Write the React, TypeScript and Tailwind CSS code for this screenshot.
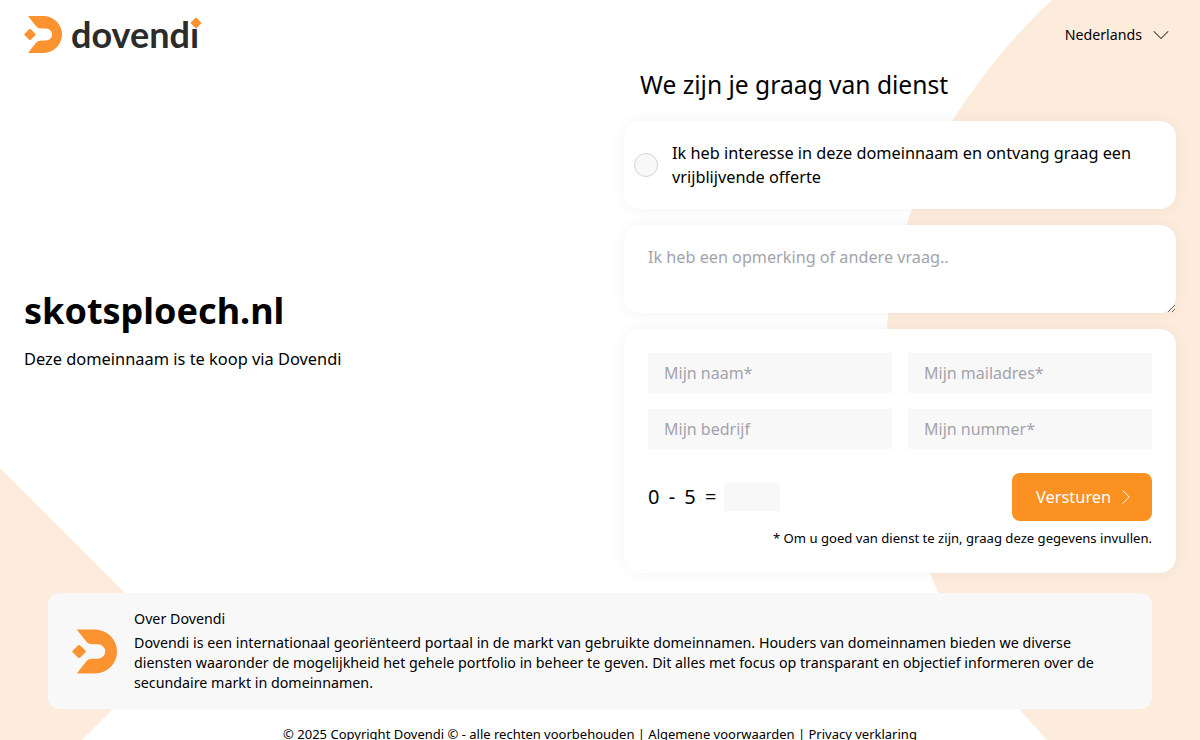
import { ChevronDown, ChevronRight } from "lucide-react";

function LogoMark({ className }: { className: string }) {
  return (
    <svg viewBox="0 0 38 37" className={className} fill="#fb9331">
      <path d="M4 0H19.5A18.5 18.5 0 0 1 19.5 37H4L11.5 27.5Q13.5 24.6 17 24.6H22A6.1 6.1 0 0 0 22 12.4H17Q13.5 12.4 11.5 9.5Z" />
      <path d="M5.2 13.3Q6 12.6 6.8 13.3L11.3 17.7Q12 18.5 11.3 19.3L6.8 23.7Q6 24.4 5.2 23.7L.7 19.3Q0 18.5.7 17.7Z" />
    </svg>
  );
}

const fieldClass =
  "h-10 w-full bg-[#f8f8f9] px-4 text-base text-black outline-none placeholder:text-[#a3a3ad]";

export default function App() {
  return (
    <div className="relative flex h-[740px] flex-col overflow-hidden bg-white font-['Noto_Sans',sans-serif] text-black">
      {/* background shapes */}
      <svg viewBox="0 0 1200 740" className="absolute inset-0 h-full w-full" fill="#fdebdc">
        <path d="M1052 0C1015 34 982 74 953 120C932 152 920 180 912 209C899 245 892 278 888 313C882 400 900 500 930 573C950 625 985 672 1047 740H1200V0Z" />
        <path d="M0 468L177 645L82 740H0Z" />
      </svg>

      <div className="relative grid flex-1 grid-cols-2">
        <div className="flex flex-col px-6">
          <div className="flex h-[69px] items-start pt-4">
            <LogoMark className="h-[37px] w-[38px]" />
            <div className="relative ml-[9px] font-['Lato',sans-serif] text-[36px] leading-[37px] font-bold text-[#2b2b2b]">
              dovendı
              <span className="absolute top-[3px] right-[-1px] h-[8px] w-[8px] rotate-45 rounded-[1px] bg-[#fb9331]" />
            </div>
          </div>
          <div className="mt-[217px]">
            <h1 className="text-4xl leading-[50px] font-bold">skotsploech.nl</h1>
            <p className="mt-[11px] text-[16.4px] leading-6">Deze domeinnaam is te koop via Dovendi</p>
          </div>
        </div>

        <div className="flex flex-col px-6">
          <div className="flex h-[69px] items-center justify-end pr-[1px]">
            <span className="text-[14.2px]">Nederlands</span>
            <ChevronDown className="ml-[5px] h-7 w-7 text-[#333]" strokeWidth={0.9} />
          </div>
          <h2 className="ml-4 text-[24.6px] leading-8">We zijn je graag van dienst</h2>

          <div className="mt-5 flex h-[88px] items-center gap-[14px] rounded-2xl bg-white pr-6 pl-[10px] shadow-[0_0_16px_rgba(0,0,0,0.05)]">
            <span className="h-6 w-6 shrink-0 rounded-full border border-[#d4d4d4] bg-[#f8f8f9]" />
            <p className="text-[16.3px] leading-6">
              Ik heb interesse in deze domeinnaam en ontvang graag een vrijblijvende offerte
            </p>
          </div>

          <textarea
            placeholder="Ik heb een opmerking of andere vraag.."
            className="mt-4 block h-[88px] rounded-2xl bg-white px-6 py-5 text-[16.2px] leading-6 shadow-[0_0_16px_rgba(0,0,0,0.05)] outline-none placeholder:text-[#a3a3ad]"
          />

          <div className="mt-4 rounded-2xl bg-white px-6 pt-6 pb-[26px] shadow-[0_0_16px_rgba(0,0,0,0.05)]">
            <div className="grid grid-cols-2 gap-4">
              <input placeholder="Mijn naam*" className={fieldClass} />
              <input placeholder="Mijn mailadres*" className={fieldClass} />
              <input placeholder="Mijn bedrijf" className={fieldClass} />
              <input placeholder="Mijn nummer*" className={fieldClass} />
            </div>
            <div className="mt-6 flex items-center justify-between">
              <div className="flex items-center gap-[6px]">
                <span className="text-xl tracking-[2px]">0 - 5 =</span>
                <input className="h-7 w-14 bg-[#f8f8f9] outline-none" />
              </div>
              <button className="flex h-12 w-[140px] items-center gap-[2px] rounded-lg bg-[#fb9120] pl-6 text-[16.4px] text-white">
                Versturen
                <ChevronRight className="h-[26px] w-[26px]" strokeWidth={0.9} />
              </button>
            </div>
            <p className="mt-2 text-right text-[13.1px] leading-[18px]">
              * Om u goed van dienst te zijn, graag deze gegevens invullen.
            </p>
          </div>
        </div>
      </div>

      <div className="relative mx-12 flex h-[116px] items-center gap-[17px] rounded-xl bg-[#f8f8f9] px-6">
        <LogoMark className="h-[45px] w-[45px] shrink-0" />
        <div className="text-[14.25px] leading-5">
          <p className="mb-[4px]">Over Dovendi</p>
          <p>
            Dovendi is een internationaal georiënteerd portaal in de markt van gebruikte domeinnamen. Houders van
            domeinnamen bieden we diverse diensten waaronder de mogelijkheid het gehele portfolio in beheer te geven.
            Dit alles met focus op transparant en objectief informeren over de secundaire markt in domeinnamen.
          </p>
        </div>
      </div>

      <p className="relative mt-[15px] h-[16px] shrink-0 text-center text-[13px] leading-5">
        © 2025 Copyright Dovendi © - alle rechten voorbehouden | Algemene voorwaarden | Privacy verklaring
      </p>
    </div>
  );
}
